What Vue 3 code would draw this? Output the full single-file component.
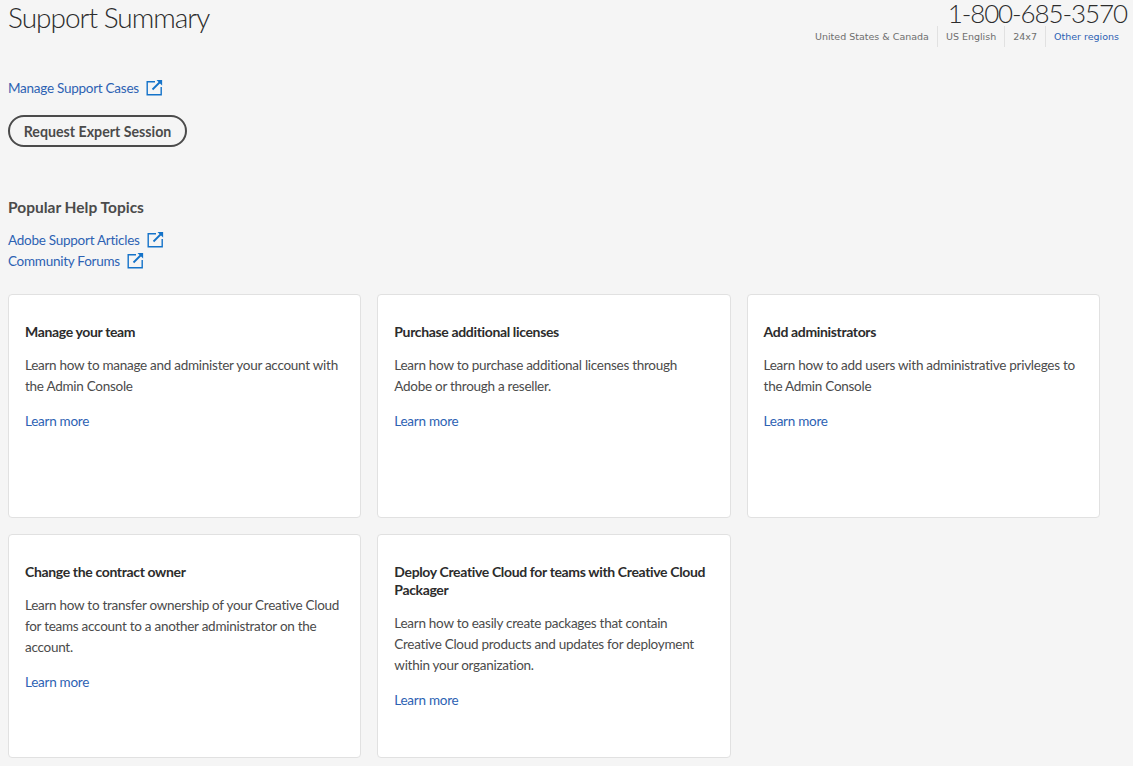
<script setup>
const cards = [
  { title: "Manage your team", text: "Learn how to manage and administer your account with the Admin Console" },
  { title: "Purchase additional licenses", text: "Learn how to purchase additional licenses through Adobe or through a reseller." },
  { title: "Add administrators", text: "Learn how to add users with administrative privleges to the Admin Console" },
  { title: "Change the contract owner", text: "Learn how to transfer ownership of your Creative Cloud for teams account to a another administrator on the account." },
  { title: "Deploy Creative Cloud for teams with Creative Cloud Packager", text: "Learn how to easily create packages that contain Creative Cloud products and updates for deployment within your organization." }
]
const topics = ["Adobe Support Articles", "Community Forums"]
</script>

<template>
  <div class="page">
    <header class="head">
      <h1>Support Summary</h1>
      <div class="phone-box">
        <div class="phone">1-800-685-3570</div>
        <ul class="meta">
          <li>United States &amp; Canada</li>
          <li>US English</li>
          <li>24x7</li>
          <li><a>Other regions</a></li>
        </ul>
      </div>
    </header>

    <a class="link cases">
      Manage Support Cases
      <svg class="ext" width="17" height="17" viewBox="0 0 17 17" fill="none" stroke="#1473c9" stroke-width="1.4">
        <path d="M9 2.7H1.2v13.1h14V8" />
        <path d="M6.5 10.5 14 3" stroke-width="1.8" />
        <path d="M10.5 .9h5.6v5.6z" fill="#1473c9" stroke="none" />
      </svg>
    </a>

    <button class="pill">Request Expert Session</button>

    <h2>Popular Help Topics</h2>
    <div class="topics">
      <a v-for="t in topics" :key="t" class="link">
        {{ t }}
        <svg class="ext" width="17" height="17" viewBox="0 0 17 17" fill="none" stroke="#1473c9" stroke-width="1.4">
          <path d="M9 2.7H1.2v13.1h14V8" />
          <path d="M6.5 10.5 14 3" stroke-width="1.8" />
          <path d="M10.5 .9h5.6v5.6z" fill="#1473c9" stroke="none" />
        </svg>
      </a>
    </div>

    <div class="grid">
      <div v-for="c in cards" :key="c.title" class="card">
        <h3>{{ c.title }}</h3>
        <p>{{ c.text }}</p>
        <a class="link">Learn more</a>
      </div>
    </div>
  </div>
</template>

<style>
body { background: #f5f5f5; }
</style>

<style scoped>
.page {
  height: 766px;
  overflow: hidden;
  box-sizing: border-box;
  padding: 0 6px 0 8px;
  background: #f5f5f5;
  font-family: "Lato", "Liberation Sans", sans-serif;
  color: #4b4b4b;
  font-size: 14px;
}
.head {
  display: flex;
  justify-content: space-between;
  align-items: flex-start;
  height: 80px;
}
h1 {
  margin: 0;
  font-size: 28px;
  line-height: 35px;
  font-weight: 300;
  letter-spacing: -1px;
  color: #2c2c2c;
}
.phone-box {
  display: flex;
  flex-direction: column;
  align-items: flex-end;
}
.phone {
  padding-top: 1px;
  font-size: 26px;
  line-height: 25px;
  font-weight: 300;
  letter-spacing: -1.1px;
  color: #2c2c2c;
}
.meta {
  display: flex;
  list-style: none;
  margin: 0;
  padding: 0;
  font-family: "DejaVu Sans", sans-serif;
  font-size: 9.5px;
  line-height: 20px;
  color: #6e6e6e;
}
.meta li { padding: 1px 8px 0; height: 20px; border-left: 1px solid #e1e1e1; }
.meta li:first-child { border-left: 0; }
.meta a { color: #2d62b3; }
.link {
  display: flex;
  align-items: center;
  color: #2d62b3;
  font-size: 13.5px;
  line-height: 21px;
  letter-spacing: -0.26px;
}
.ext { margin-left: 7px; position: relative; top: -1px; }
.cases { margin-top: -2px; }
.pill {
  display: block;
  margin-top: 16px;
  width: 179px;
  height: 32px;
  padding: 0;
  box-sizing: border-box;
  border: 2px solid #4b4b4b;
  border-radius: 16px;
  background: transparent;
  font: 700 14.2px "Lato", sans-serif;
  color: #4b4b4b;
}
h2 {
  margin: 49px 0 0;
  font-size: 15.5px;
  line-height: 22px;
  font-weight: 700;
  color: #4b4b4b;
}
.topics { margin-top: 12px; }
.grid {
  display: grid;
  grid-template-columns: repeat(3, 353.3px);
  grid-auto-rows: 224px;
  gap: 16px;
  margin-top: 22px;
}
.card {
  box-sizing: border-box;
  background: #fff;
  border: 1px solid #e1e1e1;
  border-radius: 4px;
  padding: 28px 16px 0;
}
h3 {
  margin: 0;
  font-size: 14px;
  line-height: 18px;
  font-weight: 700;
  letter-spacing: -0.35px;
  color: #2c2c2c;
}
p {
  margin: 14px 0 14px;
  font-size: 13.5px;
  line-height: 21px;
  letter-spacing: -0.27px;
  color: #4b4b4b;
}
</style>
